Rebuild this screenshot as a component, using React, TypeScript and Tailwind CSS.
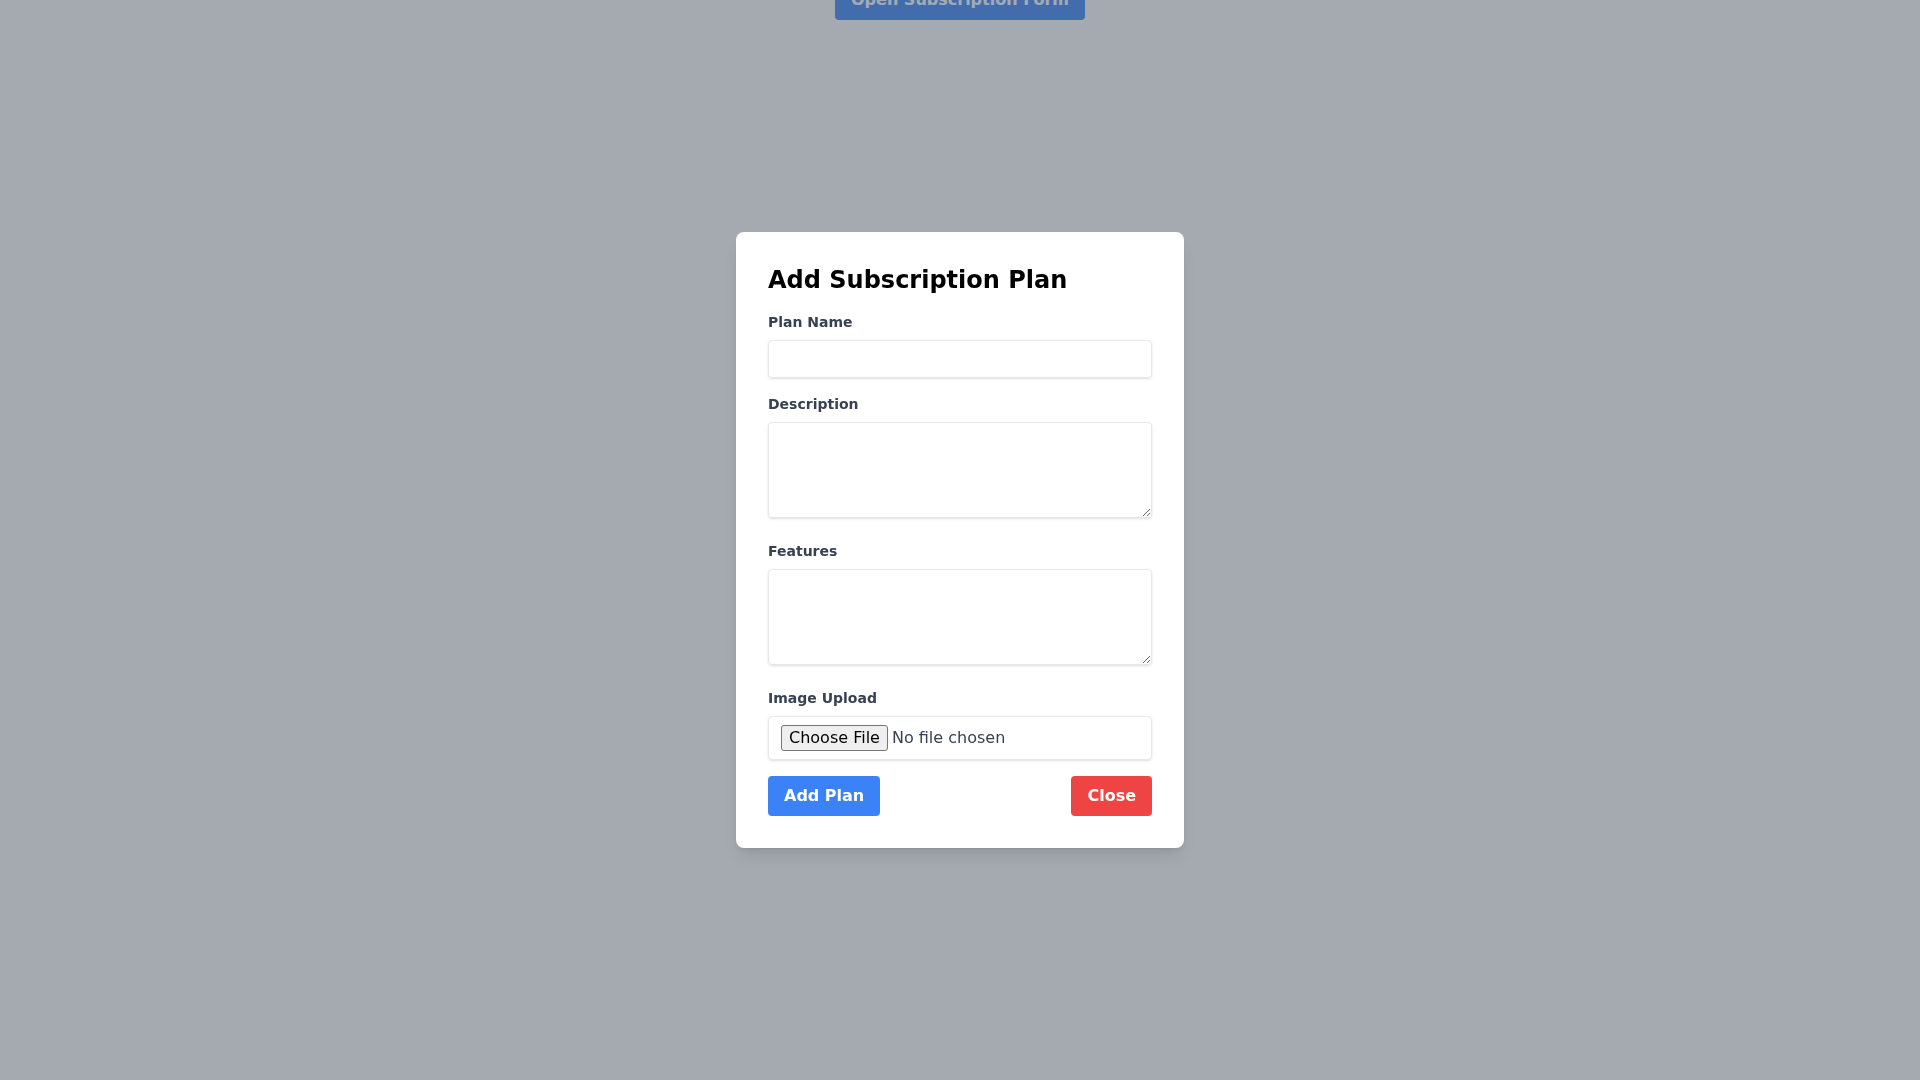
import React from "react";

export default function App() {
  return (
    <div className="min-h-screen bg-white font-['DejaVu_Sans',sans-serif]">
      <div className="flex justify-center">
        <button className="-mt-[20px] bg-[#3b82f6] text-white font-bold py-2 px-4 rounded text-base leading-6">
          Open Subscription Form
        </button>
      </div>

      <div className="fixed inset-0 bg-[#4b5563]/50 flex items-center justify-center">
        <div className="bg-white rounded-lg shadow-lg p-8 w-[448px]">
          <h2 className="text-2xl leading-8 font-bold text-black mb-4">Add Subscription Plan</h2>

          <div className="mb-4">
            <label className="block text-gray-700 text-sm leading-5 font-bold mb-2">Plan Name</label>
            <input
              type="text"
              className="shadow-sm appearance-none border border-[#e5e7eb] rounded w-full py-2 px-3 text-gray-700 text-base leading-tight outline-none"
            />
          </div>

          <div className="mb-4">
            <label className="block text-gray-700 text-sm leading-5 font-bold mb-2">Description</label>
            <textarea
              className="shadow-sm appearance-none border border-[#e5e7eb] rounded w-full h-24 py-2 px-3 text-gray-700 text-base leading-tight outline-none"
            />
          </div>

          <div className="mb-4">
            <label className="block text-gray-700 text-sm leading-5 font-bold mb-2">Features</label>
            <textarea
              className="shadow-sm appearance-none border border-[#e5e7eb] rounded w-full h-24 py-2 px-3 text-gray-700 text-base leading-tight outline-none"
            />
          </div>

          <div className="mb-4">
            <label className="block text-gray-700 text-sm leading-5 font-bold mb-2">Image Upload</label>
            <input
              type="file"
              className="shadow-sm appearance-none border border-[#e5e7eb] rounded w-full py-2 px-3 text-gray-700 text-base leading-tight outline-none file:bg-[#efefef] file:text-black file:border file:border-solid file:border-[#767676] file:rounded-[3px] file:px-[7px] file:py-0.5 file:mr-1"
            />
          </div>

          <div className="flex items-center justify-between">
            <button className="bg-[#3b82f6] text-white font-bold py-2 px-4 rounded text-base leading-6">
              Add Plan
            </button>
            <button className="bg-[#ef4444] text-white font-bold py-2 px-4 rounded text-base leading-6">
              Close
            </button>
          </div>
        </div>
      </div>
    </div>
  );
}
